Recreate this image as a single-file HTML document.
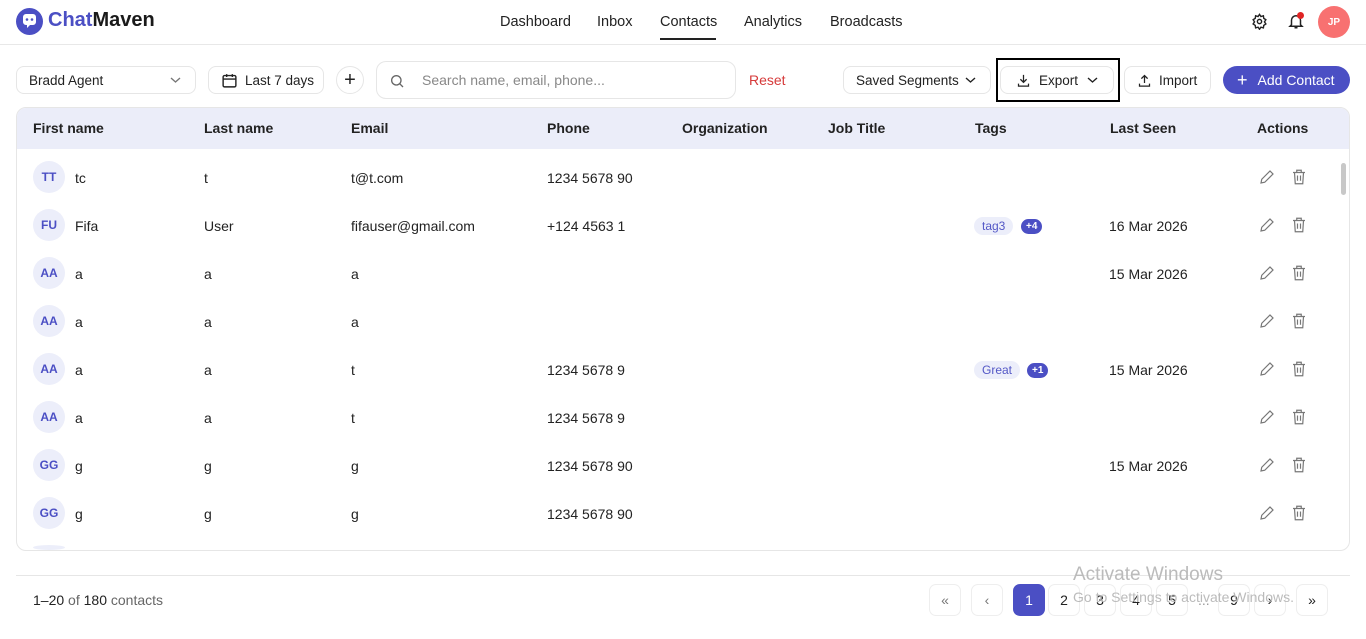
<!DOCTYPE html>
<html><head><meta charset="utf-8"><style>
*{box-sizing:border-box;margin:0;padding:0}
body{width:1366px;height:639px;overflow:hidden;background:#fff;font-family:"Liberation Sans",sans-serif;color:#1f1f1f;font-size:14px;position:relative}
.a{position:absolute}
.btn{position:absolute;border:1px solid #e6e6e6;border-radius:8px;background:#fff;display:flex;align-items:center;font-size:13.5px;color:#222}
.nav{position:absolute;top:14px;font-size:14.5px;color:#222}
.th{position:absolute;top:120px;font-weight:bold;font-size:14px;color:#222}
.av{position:absolute;left:33px;width:32px;height:32px;border-radius:50%;background:#eceefa;color:#4b4fc4;font-size:12px;font-weight:bold;display:flex;align-items:center;justify-content:center}
.c{position:absolute;font-size:14px;color:#222}
.tag{position:absolute;background:#eceefa;color:#5357c6;font-size:12px;border-radius:10px;padding:2px 8px}
.pl{position:absolute;background:#4b4fc4;color:#fff;font-size:10px;font-weight:bold;border-radius:8px;padding:2px 5px}
.pg{position:absolute;top:584px;width:32px;height:32px;border:1px solid #eee;border-radius:7px;display:flex;align-items:center;justify-content:center;font-size:14px;color:#222}
</style></head><body>
<svg class="a" style="left:16px;top:8px" width="27" height="27" viewBox="0 0 27 27"><circle cx="13.5" cy="13.5" r="13.5" fill="#4b4fc4"/><path d="M7 9a3 3 0 0 1 3-3h7a3 3 0 0 1 3 3v5a3 3 0 0 1-3 3h-3l-3 3v-3h-1a3 3 0 0 1-3-3z" fill="#fff"/><circle cx="11" cy="11.5" r="1.3" fill="#4b4fc4"/><circle cx="16" cy="11.5" r="1.3" fill="#4b4fc4"/></svg>
<div class="a" style="left:48px;top:9px;font-size:20px;font-weight:bold"><span style="color:#4b4fc4">Chat</span><span style="color:#1a1a1a">Maven</span></div>
<div class="nav" style="left:500px">Dashboard</div>
<div class="nav" style="left:597px">Inbox</div>
<div class="nav" style="left:660px">Contacts</div>
<div class="a" style="left:660px;top:38px;width:56px;height:2px;background:#222"></div>
<div class="nav" style="left:744px">Analytics</div>
<div class="nav" style="left:830px">Broadcasts</div>
<svg class="a" style="left:1251px;top:13px" width="17" height="17" viewBox="0 0 24 24" fill="none" stroke="#222" stroke-width="2"><circle cx="12" cy="12" r="3"/><path d="M12 2l2 3 3.5-1 .5 3.5 3 2-2 3 2 3-3 2-.5 3.5-3.5-1-2 3-2-3-3.5 1-.5-3.5-3-2 2-3-2-3 3-2 .5-3.5 3.5 1z"/></svg>
<svg class="a" style="left:1287px;top:12px" width="18" height="18" viewBox="0 0 24 24" fill="none" stroke="#222" stroke-width="2"><path d="M6 17V11a6 6 0 0 1 12 0v6l2 2H4z"/><path d="M10 21h4"/></svg>
<div class="a" style="left:1297px;top:12px;width:7px;height:7px;border-radius:50%;background:#e02424"></div>
<div class="a" style="left:1318px;top:6px;width:32px;height:32px;border-radius:50%;background:#f87171;color:#fff;font-size:10px;font-weight:bold;display:flex;align-items:center;justify-content:center">JP</div>
<div class="a" style="left:0;top:44px;width:1366px;height:1px;background:#e8e8e8"></div>
<div class="btn" style="left:16px;top:66px;width:180px;height:28px;padding-left:12px">Bradd Agent<svg class="a" style="left:153px;top:9px" width="11" height="8" viewBox="0 0 11 8"><path d="M1 2l4.5 4L10 2" fill="none" stroke="#777" stroke-width="1.4"/></svg></div>
<div class="btn" style="left:208px;top:66px;width:116px;height:28px;padding-left:36px">Last 7 days<svg class="a" style="left:12px;top:5px" width="17" height="17" viewBox="0 0 24 24" fill="none" stroke="#222" stroke-width="2"><rect x="3" y="5" width="18" height="16" rx="2"/><path d="M3 10h18M8 3v4M16 3v4"/></svg></div>
<div class="btn" style="left:336px;top:66px;width:28px;height:28px;border-radius:50%;justify-content:center;font-size:20px">+</div>
<div class="btn" style="left:376px;top:61px;width:360px;height:38px;border-radius:10px;padding-left:45px;color:#888;font-size:14px">Search name, email, phone...<svg class="a" style="left:12px;top:11px" width="16" height="16" viewBox="0 0 24 24" fill="none" stroke="#666" stroke-width="2"><circle cx="11" cy="11" r="7"/><path d="M16 16l5 5"/></svg></div>
<div class="a" style="left:749px;top:72px;color:#d63a3a;font-size:14px">Reset</div>
<div class="btn" style="left:843px;top:66px;width:148px;height:28px;padding-left:12px">Saved Segments<svg class="a" style="left:121px;top:9px" width="11" height="8" viewBox="0 0 11 8"><path d="M1 2l4.5 4L10 2" fill="none" stroke="#222" stroke-width="1.4"/></svg></div>
<div class="a" style="left:996px;top:58px;width:124px;height:44px;border:2px solid #000"></div>
<div class="btn" style="left:1000px;top:66px;width:114px;height:28px;padding-left:38px">Export<svg class="a" style="left:15px;top:6px" width="15" height="15" viewBox="0 0 24 24" fill="none" stroke="#222" stroke-width="2"><path d="M12 3v12M7 10l5 5 5-5M4 17v4h16v-4"/></svg><svg class="a" style="left:86px;top:9px" width="11" height="8" viewBox="0 0 11 8"><path d="M1 2l4.5 4L10 2" fill="none" stroke="#222" stroke-width="1.4"/></svg></div>
<div class="btn" style="left:1124px;top:66px;width:87px;height:28px;padding-left:34px">Import<svg class="a" style="left:12px;top:6px" width="15" height="15" viewBox="0 0 24 24" fill="none" stroke="#222" stroke-width="2"><path d="M12 16V4M7 9l5-5 5 5M4 17v4h16v-4"/></svg></div>
<div class="a" style="left:1223px;top:66px;width:127px;height:28px;border-radius:14px;background:#4b4fc4;color:#fff;font-size:14px;display:flex;align-items:center;padding-left:14px"><span style="font-size:18px;margin-right:10px;line-height:1">+</span>Add Contact</div>
<div class="a" style="left:16px;top:107px;width:1334px;height:444px;border:1px solid #e6e6e6;border-radius:10px;overflow:hidden">
<div class="a" style="left:0;top:0;width:1334px;height:41px;background:#ebedf9"></div>
<div class="a" style="left:1324px;top:55px;width:5px;height:32px;border-radius:3px;background:#c8c8c8"></div>
</div>
<div class="th" style="left:33px">First name</div><div class="th" style="left:204px">Last name</div><div class="th" style="left:351px">Email</div><div class="th" style="left:547px">Phone</div><div class="th" style="left:682px">Organization</div><div class="th" style="left:828px">Job Title</div><div class="th" style="left:975px">Tags</div><div class="th" style="left:1110px">Last Seen</div><div class="th" style="left:1257px">Actions</div>
<div id="rows"></div>
<script>
var R=[["TT","tc","t","t@t.com","1234 5678 90","",""],["FU","Fifa","User","fifauser@gmail.com","+124 4563 1","tag3|+4","16 Mar 2026"],["AA","a","a","a","","","15 Mar 2026"],["AA","a","a","a","","",""],["AA","a","a","t","1234 5678 9","Great|+1","15 Mar 2026"],["AA","a","a","t","1234 5678 9","",""],["GG","g","g","g","1234 5678 90","","15 Mar 2026"],["GG","g","g","g","1234 5678 90","",""]];
var h="";
R.forEach(function(r,i){var y=177+48*i;
h+='<div class="av" style="top:'+(y-16)+'px">'+r[0]+'</div>';
h+='<div class="c" style="left:75px;top:'+(y-7)+'px">'+r[1]+'</div><div class="c" style="left:204px;top:'+(y-7)+'px">'+r[2]+'</div><div class="c" style="left:351px;top:'+(y-7)+'px">'+r[3]+'</div><div class="c" style="left:547px;top:'+(y-7)+'px">'+r[4]+'</div><div class="c" style="left:1109px;top:'+(y-7)+'px">'+r[6]+'</div>';
if(r[5]){var t=r[5].split("|");h+='<div class="tag" style="left:974px;top:'+(y-8)+'px">'+t[0]+'</div><div class="pl" style="left:'+(t[0]=="tag3"?1021:1027)+'px;top:'+(y-6)+'px">'+t[1]+'</div>';}
h+='<svg class="a" style="left:1258px;top:'+(y-9)+'px" width="18" height="18" viewBox="0 0 24 24" fill="none" stroke="#777" stroke-width="1.6"><path d="M4 20l1-5L16 4l4 4L9 19z"/></svg><svg class="a" style="left:1290px;top:'+(y-9)+'px" width="18" height="18" viewBox="0 0 24 24" fill="none" stroke="#777" stroke-width="1.6"><path d="M4 6h16M9 6V3h6v3M6 6l1 15h10l1-15M10 10v7M14 10v7"/></svg>';});
h+='<div class="av" style="top:545px;height:5px"></div>';
document.getElementById("rows").innerHTML=h;
</script>
<div class="a" style="left:16px;top:575px;width:1334px;height:1px;background:#e6e6e6"></div>
<div class="a" style="left:33px;top:592px;font-size:14px;color:#666"><span style="color:#222">1–20</span> of <span style="color:#222">180</span> contacts</div>
<div class="pg" style="left:929px;color:#777">«</div><div class="pg" style="left:971px;color:#777">‹</div>
<div class="pg" style="left:1013px;background:#4b4fc4;border-color:#4b4fc4;color:#fff">1</div>
<div class="pg" style="left:1048px">2</div><div class="pg" style="left:1084px">3</div><div class="pg" style="left:1120px">4</div><div class="pg" style="left:1156px">5</div>
<div class="a" style="left:1198px;top:592px;color:#999">...</div>
<div class="pg" style="left:1218px">9</div><div class="pg" style="left:1254px">›</div><div class="pg" style="left:1296px">»</div>
<div class="a" style="left:1073px;top:564px;font-size:19px;color:#bbb">Activate Windows</div>
<div class="a" style="left:1073px;top:589px;font-size:14px;color:#bbb">Go to Settings to activate Windows.</div>
</body></html>
